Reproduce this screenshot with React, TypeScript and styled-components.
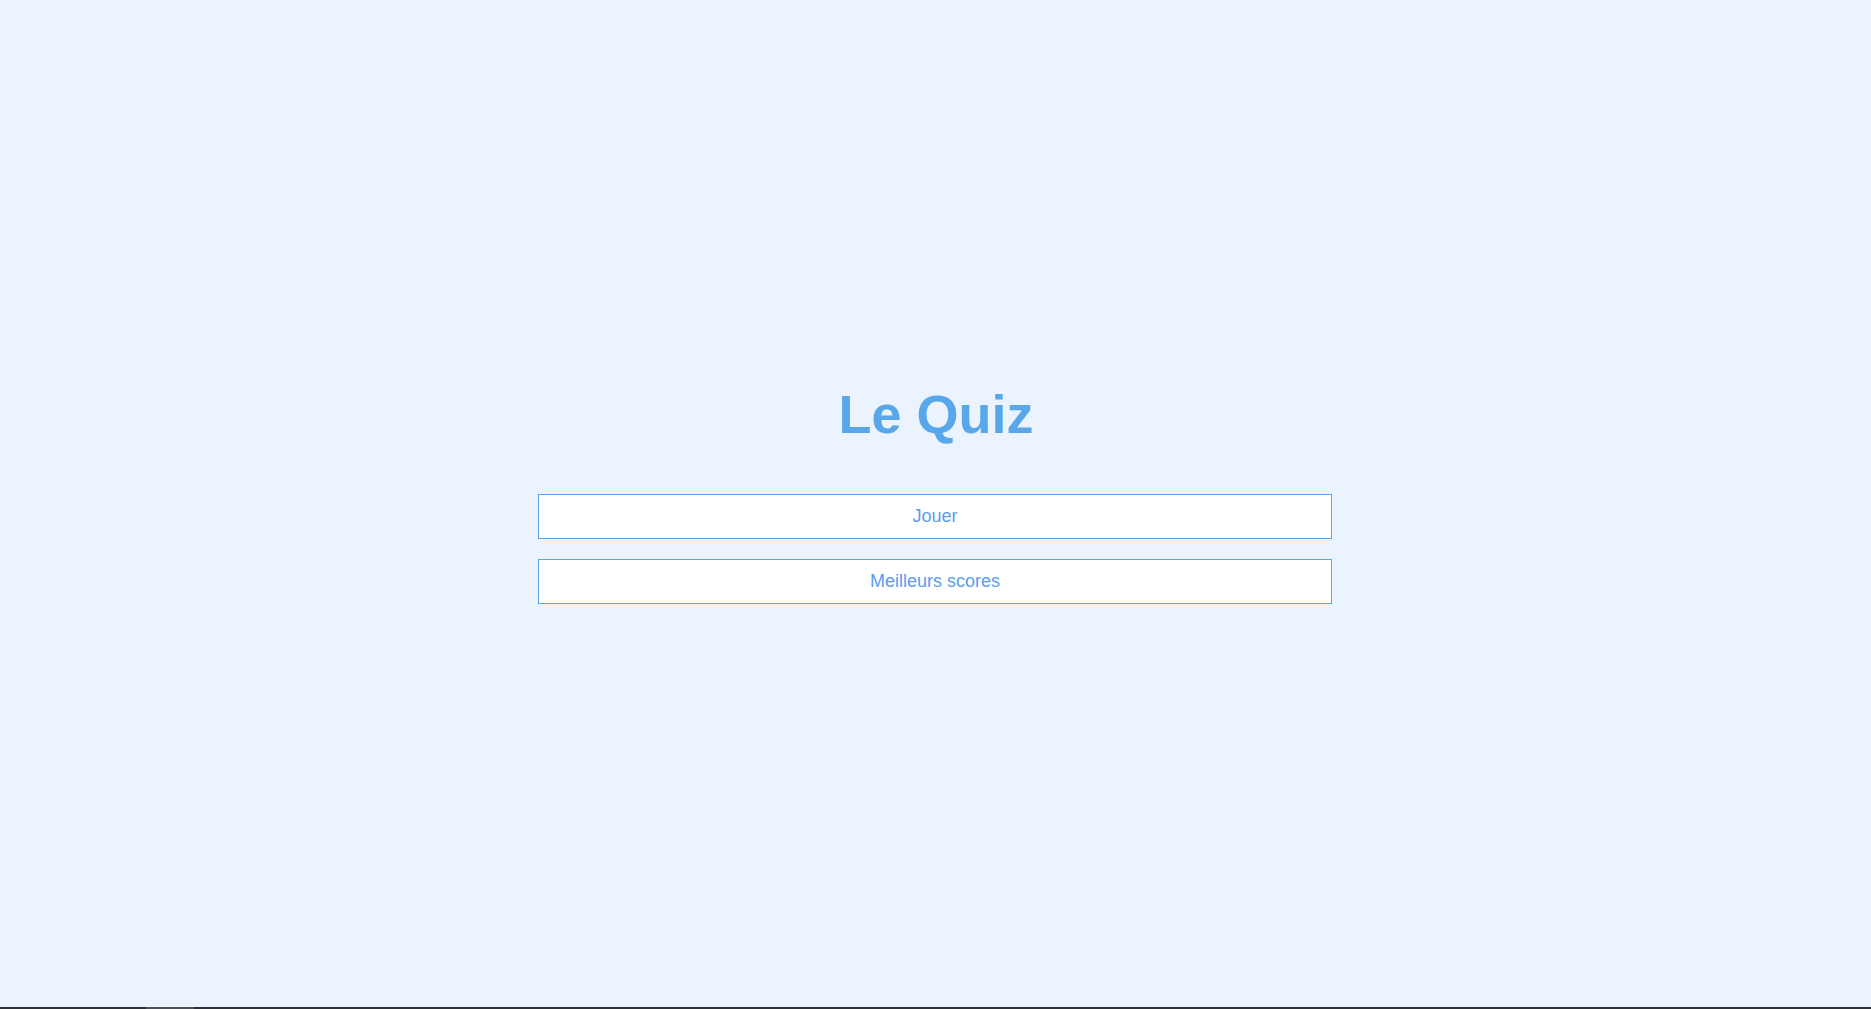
import React from "react";
import styled, { createGlobalStyle } from "styled-components";

const GlobalStyle = createGlobalStyle`
  html, body {
    margin: 0;
    padding: 0;
    background: #ebf3fe;
    overflow: hidden;
  }
  * { box-sizing: border-box; }
`;

const Page = styled.div`
  height: 100vh;
  display: flex;
  flex-direction: column;
  background: #ebf3fe;
  font-family: "Liberation Sans", Arial, sans-serif;
`;

const Main = styled.main`
  flex: 1;
  display: flex;
  flex-direction: column;
  align-items: center;
  padding-top: 387px;
`;

const Title = styled.h1`
  margin: 0 0 0 1px;
  font-size: 54px;
  line-height: 54px;
  font-weight: 700;
  color: #58a7ea;
`;

const Menu = styled.nav`
  margin: 53px 1px 0 0;
  display: flex;
  flex-direction: column;
  gap: 20px;
  width: 794px;
`;

const MenuButton = styled.button`
  height: 45px;
  width: 100%;
  background: #ffffff;
  border: 1px solid #5aa5ea;
  border-radius: 0;
  color: #5a9df0;
  font-family: "Liberation Sans", Arial, sans-serif;
  font-size: 18px;
  padding: 0;
  cursor: pointer;
`;

const ScrollTrack = styled.div`
  height: 2px;
  background: #2b2f36;
  display: flex;
`;

const ScrollThumb = styled.div`
  margin-left: 146px;
  width: 48px;
  background: #4b5058;
`;

export default function App() {
  return (
    <Page>
      <GlobalStyle />
      <Main>
        <Title>Le Quiz</Title>
        <Menu>
          <MenuButton>Jouer</MenuButton>
          <MenuButton>Meilleurs scores</MenuButton>
        </Menu>
      </Main>
      <ScrollTrack>
        <ScrollThumb />
      </ScrollTrack>
    </Page>
  );
}
